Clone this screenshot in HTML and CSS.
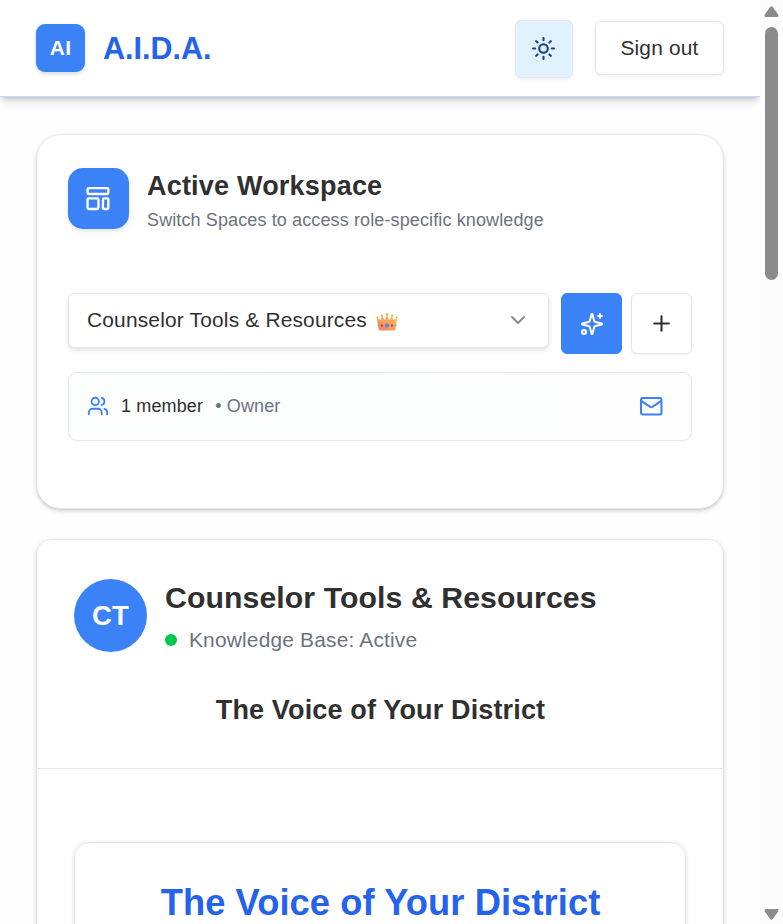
FILE: index.html
```html
<!DOCTYPE html>
<html lang="en">
<head>
<meta charset="utf-8">
<title>A.I.D.A.</title>
<link rel="stylesheet" href="styles.css">
</head>
<body>
<div class="app">
  <div class="page">
    <header class="topbar">
      <div class="logo">AI</div>
      <div class="brand">A.I.D.A.</div>
      <button class="btn theme" aria-label="Theme">
        <svg class="icon" width="25" height="25" viewBox="0 0 24 24"><circle cx="12" cy="12" r="4.1"/><path d="M12 2v2M12 20v2M4.930 4.930l1.410 1.410M17.660 17.660l1.410 1.410M2 12h2M20 12h2M6.340 17.660l-1.410 1.410M19.070 4.930l-1.410 1.410"/></svg>
      </button>
      <button class="btn signout">Sign out</button>
    </header>
    <main class="content">
      <section class="card workspace">
        <div class="ws-head">
          <div class="ws-icon">
            <svg class="icon" width="28" height="28" viewBox="0 0 24 24"><rect x="2.200" y="2.700" width="17.800" height="5" rx="1"/><rect x="2.200" y="11.400" width="9.300" height="9.200" rx="1"/><rect x="15.400" y="11.400" width="4.600" height="9.200" rx="1"/></svg>
          </div>
          <div>
            <h2 class="ws-title">Active Workspace</h2>
            <p class="ws-sub">Switch Spaces to access role-specific knowledge</p>
          </div>
        </div>
        <div class="controls">
          <div class="select">
            <span>Counselor Tools &amp; Resources</span>
            <svg class="crown" width="22" height="18" viewBox="0 0 22 18">
              <defs><linearGradient id="gold" x1="0" y1="1" x2="1" y2="0"><stop offset="0" stop-color="#f37e5f"/><stop offset=".55" stop-color="#f9a55b"/><stop offset="1" stop-color="#f4c65c"/></linearGradient></defs>
              <path fill="url(#gold)" d="M.8 5 4.500 7 6 3.500l3 3.500 2-5.500 2 5.500L16 3.500l1.500 3.500L21.200 5 19.300 16.500Q19.100 17.500 18 17.500H4Q2.900 17.500 2.700 16.500z"/>
              <g fill="#e2b350"><circle cx="1.300" cy="4.500" r="1.100"/><circle cx="5.800" cy="2.800" r="1.200"/><circle cx="11" cy="1.600" r="1.400"/><circle cx="16.200" cy="2.800" r="1.200"/><circle cx="20.700" cy="4.500" r="1.100"/></g>
              <circle cx="11" cy="12.500" r="2.100" fill="#4c88f5"/><circle cx="6" cy="12.500" r="1.200" fill="#f0325a"/><circle cx="16" cy="12.500" r="1.200" fill="#f0325a"/><circle cx="2.300" cy="12.500" r=".9" fill="#5eb5e0"/><circle cx="19.700" cy="12.500" r=".9" fill="#5eb5e0"/>
            </svg>
            <svg class="icon chevron" width="24" height="24" viewBox="0 0 24 24"><path d="m6 9 6 6 6-6"/></svg>
          </div>
          <button class="square primary" aria-label="Enhance">
            <svg class="icon" width="24" height="24" viewBox="0 0 24 24"><path d="M9.937 15.500A2 2 0 0 0 8.500 14.063l-6.135-1.582a.5.5 0 0 1 0-.962L8.500 9.936A2 2 0 0 0 9.937 8.500l1.582-6.135a.5.5 0 0 1 .963 0L14.063 8.500A2 2 0 0 0 15.500 9.937l6.135 1.581a.5.5 0 0 1 0 .964L15.500 14.063a2 2 0 0 0-1.437 1.437l-1.582 6.135a.5.5 0 0 1-.963 0zM20 2v4M22 4h-4"/><circle cx="4" cy="20" r="2"/></svg>
          </button>
          <button class="square" aria-label="Add">
            <svg class="icon" width="25" height="25" viewBox="0 0 24 24"><path d="M5 12h14M12 5v14"/></svg>
          </button>
        </div>
        <div class="members">
          <svg class="icon people" width="22" height="22" viewBox="0 0 24 24"><path d="M16 21v-2a4 4 0 0 0-4-4H6a4 4 0 0 0-4 4v2M16 3.128a4 4 0 0 1 0 7.744M22 21v-2a4 4 0 0 0-3-3.870"/><circle cx="9" cy="7" r="4"/></svg>
          <span class="count">1 member</span>
          <span class="role">• Owner</span>
          <svg class="icon mail" width="24.500" height="24.500" viewBox="0 0 24 24"><rect x="2" y="4" width="20" height="16" rx="1.600"/><path d="m2.500 7 8.500 5.600a2 2 0 0 0 2 0L21.500 7"/></svg>
        </div>
      </section>
      <section class="card chat">
        <div class="chat-head">
          <div class="identity">
            <div class="avatar">CT</div>
            <div>
              <h1 class="chat-title">Counselor Tools &amp; Resources</h1>
              <div class="status"><span class="dot"></span><span>Knowledge Base: Active</span></div>
            </div>
          </div>
          <h3 class="tagline">The Voice of Your District</h3>
        </div>
        <div class="chat-body">
          <div class="welcome"><h2 class="welcome-title">The Voice of Your District</h2></div>
        </div>
      </section>
    </main>
  </div>
  <div class="scrollbar">
    <svg width="15" height="12" viewBox="0 0 15 12"><path d="M6 1.200Q7.500-.6 9 1.200L14.200 8.500Q15 11 13 11H2Q0 11 .8 8.500z"/></svg>
    <div class="thumb"></div>
    <svg class="down" width="15" height="12" viewBox="0 0 15 12"><path d="M6 10.800Q7.500 12.600 9 10.800L14.200 3.500Q15 1 13 1H2Q0 1 .8 3.500z"/></svg>
  </div>
</div>
</body>
</html>
```
FILE: styles.css
```css
* { box-sizing: border-box; margin: 0; padding: 0; }
html, body { height: 100%; overflow: hidden; }
body { background: #fff; color: #303030; font: 20.9px/30px "Liberation Sans", Arial, sans-serif; letter-spacing: .19px; }
button { font: inherit; color: inherit; letter-spacing: inherit; }
svg { display: block; flex: none; }
.icon { fill: none; stroke: currentColor; stroke-width: 2; stroke-linecap: round; stroke-linejoin: round; }
.app { display: flex; height: 924px; overflow: hidden; }
.page { width: 760px; height: 924px; overflow: hidden; background: #fefefe; }

.topbar { display: flex; align-items: center; height: 97px; padding: 0 36px; background: #fff; border-bottom: 1px solid #bfdbfe; box-shadow: 0 6px 9px -1px rgba(0,0,0,.1), 0 3px 6px -2px rgba(0,0,0,.2); }
.logo { display: flex; align-items: center; justify-content: center; width: 49px; height: 48px; border-radius: 9px; background: #3b82f6; color: #fff; font-weight: 700; box-shadow: 0 2px 4px rgba(0,0,0,.15); }
.brand { margin-left: 18px; color: #2563eb; font-size: 30.5px; font-weight: 700; letter-spacing: 0; }
.btn { display: flex; align-items: center; justify-content: center; background: #fff; border: 1px solid #e5e7eb; border-radius: 6px; box-shadow: 0 1px 4px rgba(0,0,0,.08); }
.theme { width: 58px; height: 58px; margin: 1px 0 0 auto; padding: 0 1px 1px 0; background: #e0f2fe; color: #1e3a8a; }
.signout { width: 129px; height: 54px; margin-left: 22.500px; padding-bottom: 1px; }

.content { padding: 37px 36px 0; }
.card { width: 688px; background: #fff; border: 1px solid #e5e7eb; box-shadow: 0 2px 5px rgba(0,0,0,.13), 0 2px 3px -1px rgba(0,0,0,.13); }
.workspace { height: 375px; padding: 33px 31px; border-radius: 25px; }
.ws-head { display: flex; align-items: center; gap: 18px; height: 61px; }
.ws-icon { display: flex; align-items: center; justify-content: center; width: 61px; height: 61px; border-radius: 15px; background: #3b82f6; color: #fff; box-shadow: 0 2px 4px rgba(0,0,0,.12); }
.ws-title { margin-top: 3px; font-size: 27px; line-height: 36px; letter-spacing: .2px; }
.ws-sub { margin-top: 4px; font-size: 18px; line-height: 24px; letter-spacing: .12px; color: #6b7280; }
.controls { display: flex; gap: 9px; margin-top: 64px; }
.select { display: flex; align-items: center; width: 482px; height: 55px; margin-right: 3px; padding: 0 18px 2px; border: 1px solid #e5e7eb; border-radius: 6px; background: #fff; box-shadow: 0 2px 4px rgba(0,0,0,.13); }
.crown { margin: 4px 0 0 9px; }
.chevron { margin-left: auto; color: #8c8c8c; }
.square { display: flex; align-items: center; justify-content: center; width: 61px; height: 61px; border: 1px solid #e5e7eb; border-radius: 6px; background: #fff; box-shadow: 0 1px 3px rgba(0,0,0,.07); }
.primary { background: #3b82f6; border-color: #3b82f6; color: #fff; box-shadow: none; }
.members { display: flex; align-items: center; height: 69px; margin-top: 18px; padding: 0 28px 2px 18px; border: 1px solid #e5e7eb; border-radius: 9px; background: linear-gradient(90deg, #fcfefe, #fdfdfd); font-size: 18px; letter-spacing: .14px; }
.people { color: #3b82f6; }
.count { margin-left: 12px; }
.role { margin-left: 12px; color: #6b7280; }
.mail { margin: 2px 0 0 auto; color: #3b82f6; }

.chat { height: 420px; margin-top: 30px; border-radius: 15px; }
.chat-head { height: 229px; padding: 36px 37px 0; border-bottom: 1px solid #e5e7eb; }
.identity { display: flex; align-items: center; gap: 18px; height: 79px; }
.avatar { display: flex; align-items: center; justify-content: center; width: 73px; height: 73px; border-radius: 50%; background: #3b82f6; color: #fff; font-size: 27.45px; font-weight: 700; }
.chat-title { padding-top: 1px; font-size: 30.2px; line-height: 40px; letter-spacing: .1px; }
.status { display: flex; align-items: center; gap: 12px; margin-top: 7px; color: #6b7280; }
.dot { width: 12px; height: 12px; border-radius: 50%; background: #00c950; }
.tagline { margin: 37px 0 0 1px; text-align: center; font-size: 27px; line-height: 36px; letter-spacing: .15px; }
.chat-body { padding: 73px 37px 0; }
.welcome { height: 160px; padding-top: 37px; border: 1px solid #e5e7eb; border-radius: 15px; box-shadow: 0 1px 4px rgba(0,0,0,.14); }
.welcome-title { margin-left: 1px; text-align: center; font-size: 36.3px; line-height: 46px; letter-spacing: .08px; color: #2563eb; }

.scrollbar { display: flex; flex-direction: column; align-items: center; width: 23px; padding-top: 6px; background: #fcfcfc; fill: #8b8b8b; }
.thumb { width: 13px; height: 253px; margin-top: 9px; border-radius: 7px; background: #8b8b8b; }
.down { margin: auto 0 4px; }
```
